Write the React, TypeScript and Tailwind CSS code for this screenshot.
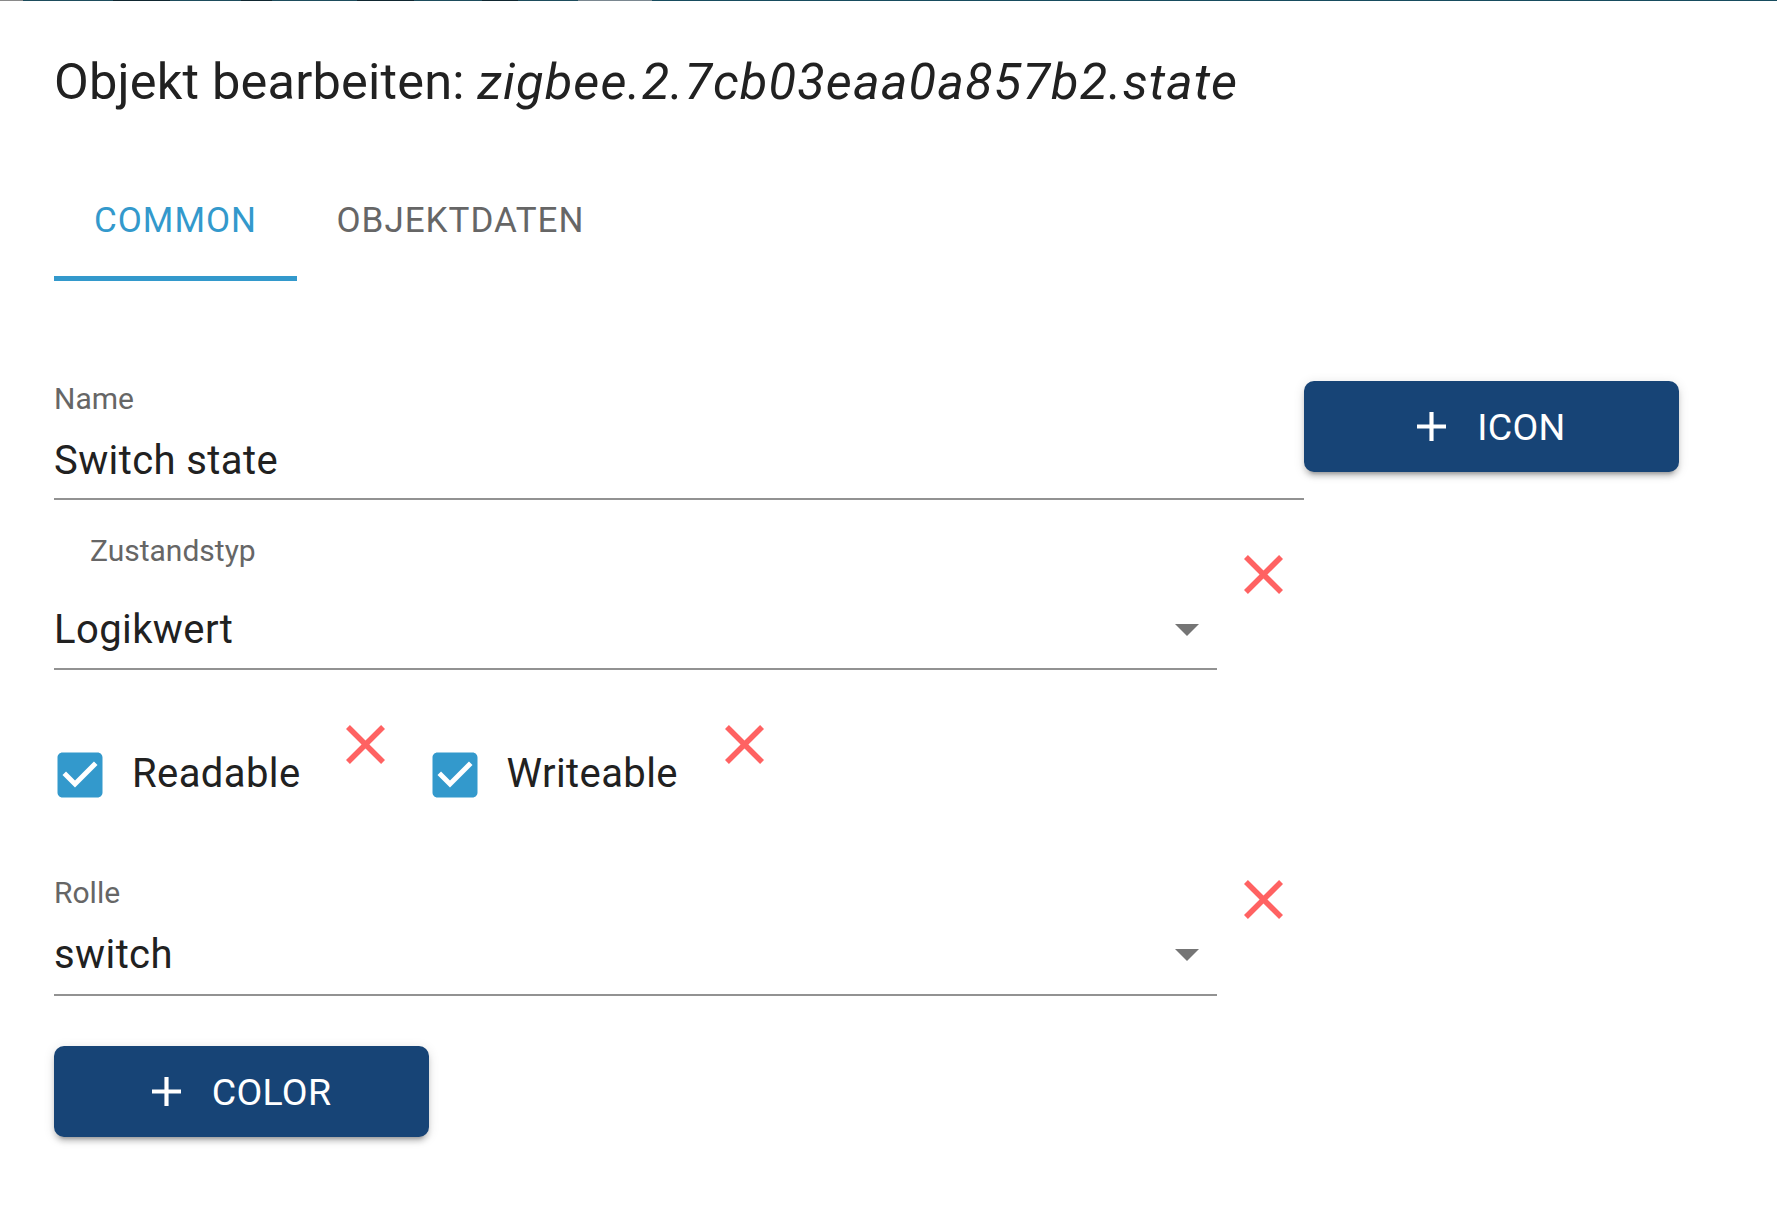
import React from 'react';

const FONT = "font-['Roboto','Liberation_Sans',sans-serif]";

function CloseX({ className }: { className?: string }) {
  return (
    <svg viewBox="5 5 14 14" className={className} width={39} height={39}>
      <path
        fill="#ff6262"
        d="M19 6.41L17.59 5 12 10.59 6.41 5 5 6.41 10.59 12 5 17.59 6.41 19 12 13.41 17.59 19 19 17.59 13.41 12z"
      />
    </svg>
  );
}

function Plus() {
  return (
    <svg viewBox="5 5 14 14" width={29} height={29}>
      <path fill="#ffffff" d="M19 13h-6v6h-2v-6H5v-2h6V5h2v6h6v2z" />
    </svg>
  );
}

function DropArrow() {
  return (
    <svg viewBox="7 10 10 5" width={24} height={12} className="mr-[18px] shrink-0">
      <path fill="#757575" d="M7 10l5 5 5-5z" />
    </svg>
  );
}

function CheckBox() {
  return (
    <svg viewBox="0 0 24 24" width={60} height={60} className="ml-[-4px] mt-[20px] shrink-0">
      <path
        fill="#3399cc"
        d="M19 3H5c-1.11 0-2 .9-2 2v14c0 1.1.89 2 2 2h14c1.11 0 2-.9 2-2V5c0-1.1-.89-2-2-2zm-9 14l-5-5 1.41-1.41L10 14.17l7.59-7.59L19 8l-9 9z"
      />
    </svg>
  );
}

function BlueButton({ label }: { label: string }) {
  return (
    <button className="w-[375px] h-[91px] rounded-[10px] bg-[#174476] flex items-center justify-center gap-[31px] text-white text-[37.5px] font-normal tracking-[0.3px] shadow-[0_7px_3px_-5px_rgba(0,0,0,0.2),0_5px_5px_0_rgba(0,0,0,0.14),0_2px_12px_0_rgba(0,0,0,0.12)]">
      <Plus />
      <span className="leading-[44px]">{label}</span>
    </button>
  );
}

export default function App() {
  return (
    <div className={`w-[1777px] h-[1205px] bg-white overflow-hidden ${FONT}`}>
      {/* cut-off app bar edge */}
      <div className="flex h-px">
        <div className="w-[23px] bg-[#8a8a8a]" />
        <div className="w-[90px] bg-[#1d4c5c]" />
        <div className="w-[57px] bg-[#0f2630]" />
        <div className="w-[71px] bg-[#1d4c5c]" />
        <div className="w-[31px] bg-[#0f2630]" />
        <div className="w-[85px] bg-[#1d4c5c]" />
        <div className="w-[57px] bg-[#0f2630]" />
        <div className="w-[68px] bg-[#1d4c5c]" />
        <div className="w-[36px] bg-[#0f2630]" />
        <div className="w-[60px] bg-[#1d4c5c]" />
        <div className="w-[74px] bg-[#7a8790]" />
        <div className="flex-1 bg-[#174c5e]" />
      </div>

      <div className="pl-[54px]">
        <h1 className="mt-[51px] text-[50.5px] leading-[60px] font-normal tracking-[0.2px] text-[#212121]">
          Objekt bearbeiten: <i className="tracking-[1.15px]">zigbee.2.7cb03eaa0a857b2.state</i>
        </h1>

        {/* tabs */}
        <div className="mt-[49px] flex h-[120px] text-[35px] font-normal tracking-[1px] leading-[42px]">
          <div className="w-[243px] flex items-center justify-center border-b-[5px] border-[#3399cc] pt-[5px] text-[#3399cc]">
            COMMON
          </div>
          <div className="w-[327px] flex items-center justify-center text-[#666666]">
            OBJEKTDATEN
          </div>
        </div>

        {/* name + icon */}
        <div className="flex items-start">
          <div className="w-[1250px] mt-[100px] border-b-[2.5px] border-[#929292]">
            <div className="text-[30px] leading-[36px] text-[#666666]">Name</div>
            <div className="mt-[20px] pb-[13px] text-[40px] leading-[48px] tracking-[0.4px] text-[#212121]">Switch state</div>
          </div>
          <div className="mt-[100px]">
            <BlueButton label="ICON" />
          </div>
        </div>

        {/* state type */}
        <div className="flex items-start mt-[33px]">
          <div className="w-[1163px] border-b-[2.5px] border-[#929292]">
            <div className="ml-[36px] text-[30px] leading-[36px] text-[#666666]">Zustandstyp</div>
            <div className="mt-[37px] pb-[14px] flex items-center justify-between">
              <span className="text-[40px] leading-[48px] tracking-[0.4px] text-[#212121]">Logikwert</span>
              <DropArrow />
            </div>
          </div>
          <CloseX className="ml-[27px] mt-[22px]" />
        </div>

        {/* checkboxes */}
        <div className="flex items-start mt-[55px] h-[78px]">
          <CheckBox />
          <span className="ml-[22px] mt-[25px] text-[40px] leading-[48px] tracking-[0.4px] text-[#212121]">Readable</span>
          <CloseX className="ml-[45px]" />
          <div className="ml-[44px] flex items-start">
            <CheckBox />
            <span className="ml-[22px] mt-[25px] text-[40px] leading-[48px] tracking-[0.4px] text-[#212121]">Writeable</span>
          </div>
          <CloseX className="ml-[47px]" />
        </div>

        {/* role */}
        <div className="flex items-start mt-[72px]">
          <div className="w-[1163px] border-b-[2.5px] border-[#929292]">
            <div className="text-[30px] leading-[36px] text-[#666666]">Rolle</div>
            <div className="mt-[20px] pb-[15px] flex items-center justify-between">
              <span className="text-[40px] leading-[48px] tracking-[0.4px] text-[#212121]">switch</span>
              <DropArrow />
            </div>
          </div>
          <CloseX className="ml-[27px] mt-[5px]" />
        </div>

        <div className="mt-[50px]">
          <BlueButton label="COLOR" />
        </div>
      </div>
    </div>
  );
}
